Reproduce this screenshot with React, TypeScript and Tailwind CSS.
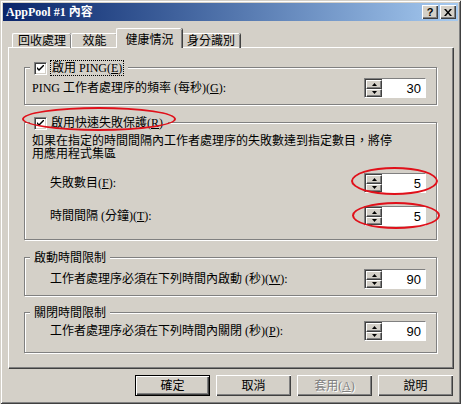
import type { ReactNode } from "react";

const FONT = { fontFamily: '"Liberation Serif", "Noto Sans CJK TC", serif' };

const Mn = ({ k }: { k: string }) => (
  <span>
    (<u>{k}</u>)
  </span>
);

const Check = () => (
  <span className="flex h-[13px] w-[13px] shrink-0 items-center justify-center border border-t-[#808080] border-l-[#808080] border-b-white border-r-white bg-white shadow-[inset_1px_1px_0_#404040,inset_-1px_-1px_0_#D4D0C8]">
    <svg width="7" height="7" viewBox="0 0 7 7">
      <path d="M0 2 L0 4 L2 6 L7 1 L7 -1 L2 4 Z" fill="#000" />
    </svg>
  </span>
);

const Arrow = ({ up }: { up?: boolean }) => (
  <span className="flex h-[9px] w-[16px] items-center justify-center border border-t-white border-l-white border-b-[#404040] border-r-[#404040] bg-[#D4D0C8] shadow-[inset_-1px_-1px_0_#808080]">
    <svg width="5" height="3" viewBox="0 0 5 3">
      {up ? <path d="M2.5 0 L5 3 L0 3 Z" fill="#000" /> : <path d="M0 0 L5 0 L2.5 3 Z" fill="#000" />}
    </svg>
  </span>
);

const Spinner = ({ value }: { value: string }) => (
  <div className="flex h-[20px] w-[62px] shrink-0 border border-t-[#808080] border-l-[#808080] border-b-white border-r-white shadow-[inset_1px_1px_0_#404040]">
    <div className="flex flex-col pl-[1px] pt-[1px]">
      <Arrow up />
      <Arrow />
    </div>
    <div className="flex flex-1 items-center justify-end bg-white pr-[4px] text-[13px] leading-none" style={{ fontFamily: '"Liberation Sans", sans-serif' }}>
      {value}
    </div>
  </div>
);

const Group = ({
  legend,
  className,
  children,
}: {
  legend: ReactNode;
  className: string;
  children: ReactNode;
}) => (
  <div
    className={`relative ml-[15px] w-[413px] border border-[#808080] shadow-[inset_1px_1px_0_#fff,1px_1px_0_#fff] ${className}`}
  >
    <div className="absolute left-[5px] top-[-7px] flex h-[14px] items-center gap-[3px] bg-[#D4D0C8] px-[4px] leading-[14px]">
      {legend}
    </div>
    {children}
  </div>
);

const Row = ({ label, value, indent }: { label: ReactNode; value: string; indent: string }) => (
  <div className={`flex items-center justify-between pr-[10px] ${indent}`}>
    <span className="leading-[14px]">{label}</span>
    <Spinner value={value} />
  </div>
);

const Btn = ({ children, def, dis }: { children: ReactNode; def?: boolean; dis?: boolean }) => (
  <div
    className={`flex h-[21px] w-[75px] items-center justify-center bg-[#D4D0C8] ${
      def
        ? "border border-black shadow-[inset_1px_1px_0_#fff,inset_-1px_-1px_0_#404040,inset_-2px_-2px_0_#808080]"
        : "shadow-[inset_1px_1px_0_#fff,inset_-1px_-1px_0_#404040,inset_-2px_-2px_0_#808080]"
    } ${dis ? "text-[#808080] [text-shadow:1px_1px_0_#fff]" : "text-black"}`}
  >
    {children}
  </div>
);

const Ring = ({ className }: { className: string }) => (
  <div className={`pointer-events-none absolute rounded-[50%] border-2 border-[#E0101A] ${className}`} />
);

export default function App() {
  return (
    <div
      className="relative h-[404px] w-[461px] overflow-hidden bg-[#D4D0C8] p-[3px] text-[12px] text-black shadow-[inset_1px_1px_0_#D4D0C8,inset_-1px_-1px_0_#404040,inset_2px_2px_0_#fff,inset_-2px_-2px_0_#808080]"
      style={FONT}
    >
      {/* title bar */}
      <div className="flex h-[18px] items-center justify-between bg-gradient-to-r from-[#0A246A] to-[#A6CAF0] pl-[3px] pr-[2px]">
        <span className="text-[12px] font-bold text-white">AppPool #1 內容</span>
        <div className="flex gap-[2px]">
          <div className="flex h-[14px] w-[16px] items-center justify-center bg-[#D4D0C8] text-[11px] font-bold leading-none shadow-[inset_1px_1px_0_#fff,inset_-1px_-1px_0_#404040,inset_-2px_-2px_0_#808080]" style={{ fontFamily: '"Liberation Sans", sans-serif' }}>
            ?
          </div>
          <div className="flex h-[14px] w-[16px] items-center justify-center bg-[#D4D0C8] shadow-[inset_1px_1px_0_#fff,inset_-1px_-1px_0_#404040,inset_-2px_-2px_0_#808080]">
            <svg width="8" height="7" viewBox="0 0 8 7">
              <path d="M0 0 L2 0 L4 2.5 L6 0 L8 0 L5 3.5 L8 7 L6 7 L4 4.5 L2 7 L0 7 L3 3.5 Z" fill="#000" />
            </svg>
          </div>
        </div>
      </div>

      {/* tabs */}
      <div className="ml-[5px] mt-[6px] flex h-[20px] items-end">
        <div className="relative top-[1px] ml-[4px] flex h-[15px] w-[59px] items-center justify-center rounded-t-[2px] border-l border-t border-white shadow-[inset_-1px_0_0_#808080,1px_0_0_#404040]">
          回收處理
        </div>
        <div className="relative top-[1px] flex h-[15px] w-[46px] items-center justify-center rounded-t-[2px] border-l border-t border-white shadow-[inset_-1px_0_0_#808080,1px_0_0_#404040]">
          效能
        </div>
        <div className="relative top-[1px] z-10 -ml-[1px] flex h-[20px] w-[66px] items-start justify-center rounded-t-[2px] border-l border-t border-white bg-[#D4D0C8] pt-[2px] shadow-[inset_-1px_0_0_#808080,1px_0_0_#404040]">
          健康情況
        </div>
        <div className="relative top-[1px] flex h-[15px] w-[58px] items-center justify-center rounded-t-[2px] border-t border-white shadow-[inset_-1px_0_0_#808080,1px_0_0_#404040]">
          身分識別
        </div>
      </div>

      {/* panel */}
      <div className="ml-[5px] h-[321px] w-[445px] border-l border-t border-white pt-[19px] shadow-[inset_-1px_-1px_0_#808080,1px_1px_0_#404040]">
        <Group
          className="h-[38px] pt-[10px]"
          legend={
            <>
              <Check />
              <span className="border border-dotted border-black px-[1px]">
                啟用 PING<Mn k="E" />
              </span>
            </>
          }
        >
          <Row indent="pl-[7px]" value="30" label={<>PING 工作者處理序的頻率 (每秒)<Mn k="G" />:</>} />
        </Group>

        <Group
          className="mt-[17px] h-[118px] pt-[12px]"
          legend={
            <>
              <Check />
              <span className="px-[1px]">
                啟用快速失敗保護<Mn k="R" />
              </span>
            </>
          }
        >
          <p className="whitespace-nowrap pl-[7px] leading-[13px]">
            如果在指定的時間間隔內工作者處理序的失敗數達到指定數目，將停
            <br />
            用應用程式集區
          </p>
          <div className="mt-[12px] flex flex-col gap-[13px]">
            <Row indent="pl-[25px]" value="5" label={<>失敗數目<Mn k="F" />:</>} />
            <Row indent="pl-[25px]" value="5" label={<>時間間隔 (分鐘)<Mn k="T" />:</>} />
          </div>
        </Group>

        <Group className="mt-[17px] h-[39px] pt-[11px]" legend={<span>啟動時間限制</span>}>
          <Row indent="pl-[25px]" value="90" label={<>工作者處理序必須在下列時間內啟動 (秒)<Mn k="W" />:</>} />
        </Group>

        <Group className="mt-[16px] h-[41px] pt-[8px]" legend={<span>關閉時間限制</span>}>
          <Row indent="pl-[25px]" value="90" label={<>工作者處理序必須在下列時間內關閉 (秒)<Mn k="P" />:</>} />
        </Group>
      </div>

      {/* buttons */}
      <div className="mr-[5px] mt-[7px] flex justify-end gap-[6px]">
        <Btn def>確定</Btn>
        <Btn>取消</Btn>
        <Btn dis>
          套用<Mn k="A" />
        </Btn>
        <Btn>說明</Btn>
      </div>

      {/* red annotation rings */}
      <Ring className="left-[22px] top-[107px] h-[24px] w-[154px]" />
      <Ring className="left-[351px] top-[167px] h-[28px] w-[87px]" />
      <Ring className="left-[352px] top-[202px] h-[27px] w-[88px]" />
    </div>
  );
}
